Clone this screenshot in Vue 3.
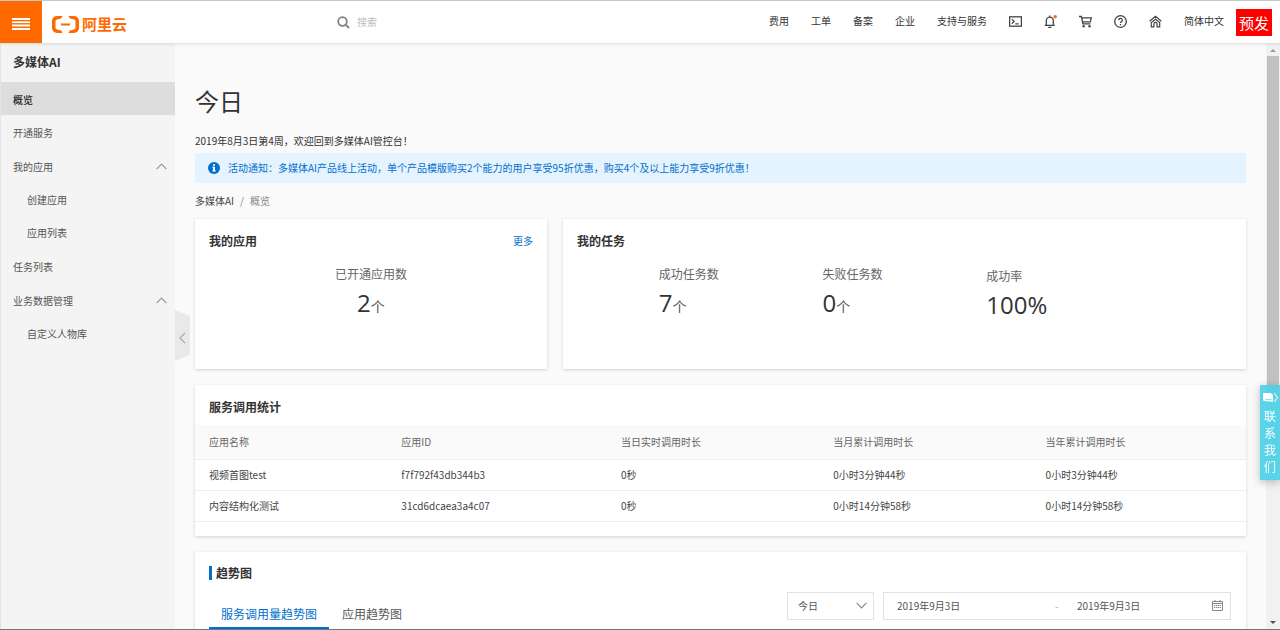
<script setup>
import { ref } from 'vue'

const keyword = ref('')
const period = ref('今日')
const startDate = ref('2019年9月3日')
const endDate = ref('2019年9月3日')

const links = ['费用', '工单', '备案', '企业', '支持与服务']

const menu = [
  { label: '概览', active: true },
  { label: '开通服务' },
  { label: '我的应用', children: ['创建应用', '应用列表'] },
  { label: '任务列表' },
  { label: '业务数据管理', children: ['自定义人物库'] },
]

const tasks = [
  { label: '成功任务数', value: '7', unit: '个' },
  { label: '失败任务数', value: '0', unit: '个' },
  { label: '成功率', value: '100%', unit: '' },
]

const columns = ['应用名称', '应用ID', '当日实时调用时长', '当月累计调用时长', '当年累计调用时长']
const rows = [
  ['视频首图test', 'f7f792f43db344b3', '0秒', '0小时3分钟44秒', '0小时3分钟44秒'],
  ['内容结构化测试', '31cd6dcaea3a4c07', '0秒', '0小时14分钟58秒', '0小时14分钟58秒'],
]
</script>

<template>
  <div class="console">
    <header class="topbar">
      <button class="menu-btn" type="button" aria-label="菜单">
        <svg width="18" height="12" viewBox="0 0 18 12" fill="#fff">
          <rect y="0" width="18" height="2" />
          <rect y="3.3" width="18" height="1.8" />
          <rect y="6.5" width="18" height="2" />
          <rect y="10" width="18" height="2" />
        </svg>
      </button>
      <a class="logo" href="#">
        <svg width="27" height="17" viewBox="0 0 27 17" fill="#ff6a00">
          <path d="M10.500 0H5a5 5 0 0 0-5 5v7a5 5 0 0 0 5 5h5.500l-1.300-2.600-4-.9A1.900 1.900 0 0 1 3.500 11.600V5.400A1.900 1.900 0 0 1 5.200 3.500l4-.9z" />
          <path d="M16.500 0H22a5 5 0 0 1 5 5v7a5 5 0 0 1-5 5h-5.500l1.300-2.600 4-.9a1.900 1.900 0 0 0 1.700-1.900V5.400a1.900 1.900 0 0 0-1.700-1.900l-4-.9z" />
          <rect x="9" y="7.500" width="9" height="2" />
        </svg>
        <span>阿里云</span>
      </a>
      <label class="search">
        <svg width="13" height="13" viewBox="0 0 13 13" fill="none" stroke="#808080" stroke-width="1.800">
          <circle cx="5.500" cy="5.500" r="4.300" />
          <path d="M8.700 8.700l3.300 3.300" />
        </svg>
        <input v-model="keyword" type="text" placeholder="搜索" aria-label="搜索" />
      </label>
      <nav class="top-links">
        <a v-for="l in links" :key="l" href="#">{{ l }}</a>
        <a href="#" aria-label="命令行">
          <svg width="13" height="13" viewBox="0 0 13 13" fill="none" stroke="#444" stroke-width="1.300">
            <rect x=".6" y="1.800" width="11.800" height="9.400" />
            <path d="M2.800 4.200l2.300 2.200-2.300 2.200M6.300 8.800h3.400" />
          </svg>
        </a>
        <a href="#" aria-label="消息">
          <svg width="13" height="13" viewBox="0 0 13 13" fill="none" stroke="#444" stroke-width="1.300">
            <path d="M.8 10.300h9.900M2.300 10V5.600a3.500 3.500 0 0 1 7 0V10M5.800 2V.5M4.200 12.300h3.200" />
            <circle cx="11.200" cy="1.700" r="1.700" fill="#ff6a00" stroke="none" />
          </svg>
        </a>
        <a href="#" aria-label="购物车">
          <svg width="13" height="13" viewBox="0 0 13 13" fill="none" stroke="#444" stroke-width="1.300">
            <path d="M0 1.500h2.400l1.500 7.300h7.500M2.800 2.800h9.500l-1 4H3.600" />
            <circle cx="4.700" cy="11.300" r="1.200" fill="#444" stroke="none" />
            <circle cx="10.500" cy="11.300" r="1.200" fill="#444" stroke="none" />
          </svg>
        </a>
        <a href="#" aria-label="帮助">
          <svg width="13" height="13" viewBox="0 0 13 13" fill="none" stroke="#444" stroke-width="1.300">
            <circle cx="6.500" cy="6.500" r="5.800" />
            <path d="M4.700 5.200a1.800 1.800 0 1 1 2.700 1.500c-.6.4-.9.700-.9 1.300M6.500 8.900v1.300" />
          </svg>
        </a>
        <a href="#" aria-label="主页">
          <svg width="13" height="13" viewBox="0 0 13 13" fill="none" stroke="#444" stroke-width="1.200">
            <path d="M.6 6.300l5.900-4.900 5.900 4.900M2.300 7.600v4.200h2.600V8.900a1.600 1.600 0 0 1 3.200 0v2.900h2.600V7.600L6.500 4.200z" />
          </svg>
        </a>
        <a href="#">简体中文</a>
      </nav>
      <span class="env">预发</span>
    </header>

    <div class="body">
      <aside class="side">
        <h2>多媒体AI</h2>
        <ul>
          <li v-for="m in menu" :key="m.label" :class="{ group: m.children }">
            <a href="#" :class="{ active: m.active }">
              <span>{{ m.label }}</span>
              <svg v-if="m.children" width="11" height="7" viewBox="0 0 11 7" fill="none" stroke="#999" stroke-width="1.200">
                <path d="M.6 6.200L5.500 1.200l4.900 5" />
              </svg>
            </a>
            <ul v-if="m.children">
              <li v-for="c in m.children" :key="c"><a class="child" href="#">{{ c }}</a></li>
            </ul>
          </li>
        </ul>
        <button class="fold" type="button" aria-label="收起">
          <svg width="15" height="51" viewBox="0 0 15 51" fill="none">
            <path d="M0 0l15 6v39L0 51z" fill="#e9e9e9" />
            <path d="M10 23l-5 5 5 5" stroke="#aaa" stroke-width="1.200" />
          </svg>
        </button>
      </aside>

      <main class="content">
        <h1>今日</h1>
        <p class="welcome">2019年8月3日第4周，欢迎回到多媒体AI管控台！</p>
        <p class="notice">
          <svg width="12" height="12" viewBox="0 0 12 12">
            <circle cx="6" cy="6" r="6" fill="#0070cc" />
            <path d="M5 2.200h2v1.600H5zM4.400 4.800H7v3.700h.8v1.100H4.300V8.500H5V5.900h-.6z" fill="#fff" />
          </svg>
          <span>活动通知：多媒体AI产品线上活动，单个产品模版购买2个能力的用户享受95折优惠，购买4个及以上能力享受9折优惠！</span>
        </p>
        <nav class="crumbs">
          <a href="#">多媒体AI</a><i>/</i><span>概览</span>
        </nav>

        <div class="pair">
          <section class="card">
            <div class="card-head">
              <h3>我的应用</h3>
              <a href="#">更多</a>
            </div>
            <dl class="stat centered">
              <dt>已开通应用数</dt>
              <dd>2<small>个</small></dd>
            </dl>
          </section>
          <section class="card">
            <div class="card-head"><h3>我的任务</h3></div>
            <div class="stats">
              <dl v-for="t in tasks" :key="t.label" class="stat" :class="{ plain: !t.unit }">
                <dt>{{ t.label }}</dt>
                <dd>{{ t.value }}<small v-if="t.unit">{{ t.unit }}</small></dd>
              </dl>
            </div>
          </section>
        </div>

        <section class="card usage">
          <div class="card-head"><h3>服务调用统计</h3></div>
          <table>
            <thead>
              <tr><th v-for="c in columns" :key="c" scope="col">{{ c }}</th></tr>
            </thead>
            <tbody>
              <tr v-for="r in rows" :key="r[1]">
                <td v-for="(v, i) in r" :key="i">{{ v }}</td>
              </tr>
            </tbody>
          </table>
        </section>

        <section class="card trend">
          <div class="card-head"><h3 class="marked">趋势图</h3></div>
          <div class="trend-bar">
            <div class="tabs" role="tablist">
              <button type="button" role="tab" aria-selected="true" class="on">服务调用量趋势图</button>
              <button type="button" role="tab" aria-selected="false">应用趋势图</button>
            </div>
            <div class="filters">
              <div class="picker">
                <select v-model="period" aria-label="时间范围">
                  <option>今日</option>
                </select>
                <svg width="11" height="7" viewBox="0 0 11 7" fill="none" stroke="#888" stroke-width="1.200">
                  <path d="M.6 .8l4.900 5 4.900-5" />
                </svg>
              </div>
              <div class="range">
                <input v-model="startDate" class="start" type="text" aria-label="开始日期" />
                <i>-</i>
                <input v-model="endDate" type="text" aria-label="结束日期" />
                <svg width="11" height="11" viewBox="0 0 11 11" fill="none" stroke="#888">
                  <path d="M.5 1.500h10v9H.5zM.5 3.500h10M3 0v2M8 0v2M2 5.500h7M2 7.500h7" />
                  <path d="M3.500 4.500v4.500M5.500 4.500v4.500M7.500 4.500v4.500" stroke="#fff" stroke-width=".6" />
                </svg>
              </div>
            </div>
          </div>
        </section>
      </main>

      <div class="scroll" aria-hidden="true">
        <svg width="14" height="13" viewBox="0 0 14 13"><path d="M4 9l3-3 3 3z" fill="#999" /></svg>
        <div class="track"><div class="thumb"></div></div>
        <svg width="14" height="13" viewBox="0 0 14 13"><path d="M4 5l3 3 3-3z" fill="#505050" /></svg>
      </div>
    </div>

    <button class="contact" type="button">
      <svg width="17" height="11" viewBox="0 0 17 11">
        <path d="M1 1h6.500a3.500 3.500 0 0 1 3.500 3.500V9.500H5.500L1 8.500z" fill="#fff" />
        <path d="M3.500 7.300q3 1 6 0" fill="none" stroke="#5ad3e8" stroke-width=".8" />
        <path d="M12 1l3.500 4.500L12 10" fill="none" stroke="#c5e4ea" stroke-width="1.600" />
      </svg>
      <span>联</span><span>系</span><span>我</span><span>们</span>
    </button>
  </div>
</template>

<style>
html,
body {
  margin: 0;
  overflow: hidden;
}
</style>

<style scoped>
* {
  box-sizing: border-box;
  margin: 0;
  padding: 0;
}
.console {
  display: flex;
  flex-direction: column;
  height: 100vh;
  border-top: 1px solid #c8c8c8;
  border-bottom: 1px solid #6f7782;
  background: #fafafa;
  color: #333;
  font: 10px/16px "Noto Sans CJK SC", sans-serif;
  overflow: hidden;
}
a {
  color: inherit;
  text-decoration: none;
}
button,
input,
select {
  border: 0;
  background: none;
  color: inherit;
  font: inherit;
  outline: 0;
}
svg {
  display: block;
  flex: none;
}
ul {
  list-style: none;
}
i {
  font-style: normal;
}

.topbar {
  display: flex;
  align-items: center;
  flex: none;
  height: 42px;
  padding-right: 8px;
  background: #fff;
  box-shadow: 0 1px 3px rgba(0, 0, 0, 0.12);
  z-index: 2;
}
.menu-btn {
  display: flex;
  align-items: center;
  justify-content: center;
  align-self: stretch;
  width: 42px;
  padding-top: 4px;
  background: #ff6a00;
}
.logo {
  display: flex;
  align-items: center;
  gap: 3px;
  margin: 4px 0 0 10px;
  color: #ff6a00;
  font-size: 15px;
  font-weight: 700;
}
.search {
  display: flex;
  align-items: center;
  gap: 7px;
  margin-left: 210px;
  color: #555;
}
.search input {
  width: 160px;
}
.search input::placeholder {
  color: #bbb;
}
.top-links {
  display: flex;
  align-items: center;
  gap: 22px;
  margin: 0 12px 2px auto;
}
.env {
  padding: 0 3px;
  background: #f00;
  color: #fff;
  font-size: 15px;
  line-height: 27px;
}

.body {
  display: flex;
  flex: 1;
  min-height: 0;
}
.side {
  position: relative;
  flex: none;
  width: 175px;
  border-left: 1px solid #e4e4e4;
  background: #f4f4f4;
  color: #555;
}
.side h2 {
  padding: 0 0 2px 12px;
  color: #333;
  font-size: 12px;
  line-height: 37px;
}
.side li a {
  display: flex;
  align-items: center;
  justify-content: space-between;
  height: 33px;
  padding: 2px 8px 0 12px;
}
.side li.group {
  margin: 1px 0;
  display: flow-root;
}
.side li a.active {
  background: #ddd;
  color: #222;
  font-weight: 500;
}
.side li a.child {
  padding-left: 26px;
}
.fold {
  position: absolute;
  left: 100%;
  top: 267px;
}

.content {
  flex: 1;
  min-width: 0;
  padding: 0 20px;
  overflow: hidden;
}
h1 {
  padding-top: 40px;
  font-size: 24px;
  font-weight: 400;
  line-height: 36px;
}
.welcome {
  padding-top: 14px;
}
.notice {
  display: flex;
  align-items: center;
  gap: 8px;
  height: 30px;
  margin-top: 4px;
  padding-left: 13px;
  background: #e5f3ff;
  color: #0070cc;
}
.crumbs {
  display: flex;
  gap: 6px;
  margin: 10px 0;
  color: #888;
}
.crumbs a {
  color: #444;
}

.card {
  background: #fff;
  box-shadow: 0 1px 3px rgba(0, 0, 0, 0.16);
}
.card-head {
  display: flex;
  justify-content: space-between;
  padding: 14px 14px 0;
}
.card-head a {
  color: #0070cc;
}
h3 {
  color: #333;
  font-size: 12px;
  line-height: 16px;
}
.pair {
  display: grid;
  grid-template-columns: 34fr 66fr;
  gap: 16px;
}
.pair .card {
  padding-bottom: 46px;
}
.stat {
  padding-top: 17px;
}
.stat.plain {
  padding-top: 19px;
}
.stat.centered {
  text-align: center;
}
.stat dt {
  color: #666;
  font-size: 12px;
}
.stat dd {
  padding-top: 5px;
  font-family: "Open Sans", "Noto Sans CJK SC", sans-serif;
  font-size: 24px;
  line-height: 32px;
}
.stat small {
  color: #555;
  font-size: 14px;
}
.stats {
  display: grid;
  grid-template-columns: repeat(3, 1fr);
  margin: 0 14px;
  padding: 0 12%;
}

.usage {
  margin: 16px 0;
  padding-bottom: 14px;
}
table {
  width: 100%;
  margin-top: 10px;
  border-collapse: collapse;
  table-layout: fixed;
}
th,
td {
  height: 31px;
  padding-left: 14px;
  border-bottom: 1px solid #eee;
  text-align: left;
}
th {
  height: 34px;
  background: #fafafa;
  color: #666;
  font-weight: 400;
}
th:nth-child(1) {
  width: 18.3%;
}
th:nth-child(2) {
  width: 20.9%;
}
th:nth-child(3),
th:nth-child(4) {
  width: 20.2%;
}
td {
  color: #444;
}

.trend .marked {
  padding-left: 4px;
  border-left: 3px solid #0070cc;
  line-height: 14px;
}
.trend-bar {
  display: flex;
  justify-content: space-between;
  margin: 12px 15px 0 14px;
  border-bottom: 1px solid #ddd;
}
.tabs {
  display: flex;
}
.tabs button {
  padding: 14px 13px 5px;
  border-bottom: 2px solid transparent;
  color: #555;
  font-size: 12px;
}
.tabs button.on {
  padding: 14px 12px 5px;
  border-color: #0070cc;
  color: #0070cc;
}
.filters {
  display: flex;
  align-items: flex-start;
  gap: 9px;
}
.picker,
.range {
  display: flex;
  align-items: center;
  height: 28px;
  border: 1px solid #e2e2e2;
  color: #555;
}
.picker {
  width: 87px;
  padding: 0 6px 0 10px;
}
.picker select {
  flex: 1;
  min-width: 0;
  appearance: none;
}
.range {
  width: 348px;
  padding: 0 7px 0 13px;
}
.range input {
  flex: 1;
  min-width: 0;
}
.range input.start {
  flex: none;
  width: 158px;
}
.range i {
  width: 22px;
  color: #aaa;
}

.scroll {
  display: flex;
  flex-direction: column;
  flex: none;
  width: 14px;
  background: #f1f1f1;
}
.track {
  flex: 1;
  padding: 0 1px;
}
.thumb {
  height: 61%;
  background: #c1c1c1;
}

.contact {
  position: fixed;
  right: 0;
  top: 385px;
  z-index: 3;
  display: flex;
  flex-direction: column;
  align-items: center;
  width: 20px;
  padding: 7px 0 5px;
  background: rgba(75, 208, 231, 0.92);
  box-shadow: 0 2px 8px rgba(0, 0, 0, 0.25);
  color: #fff;
  font-size: 12px;
  line-height: 17px;
}
.contact svg {
  margin-bottom: 4px;
}
</style>
